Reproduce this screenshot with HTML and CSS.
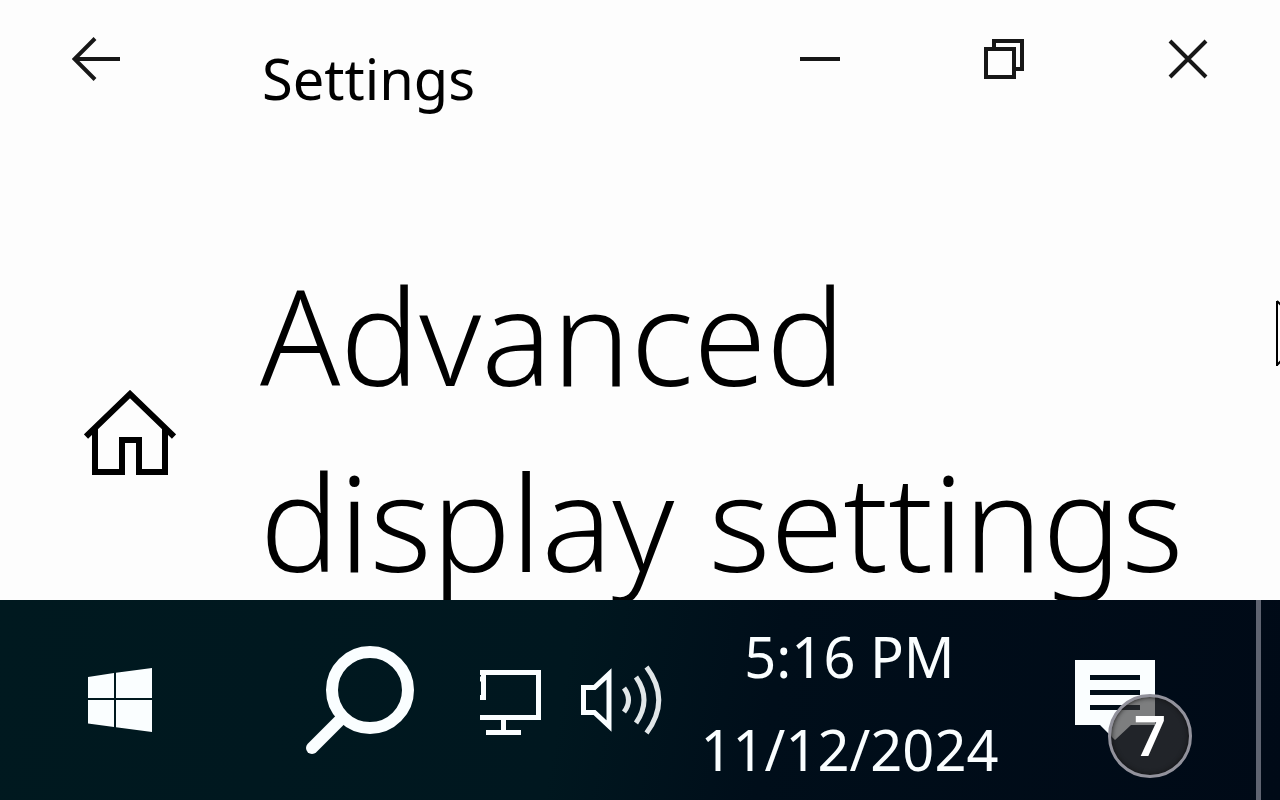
FILE: index.html
```html
<!DOCTYPE html>
<html lang="en">

<head>
    <meta charset="UTF-8">
    <title>Settings</title>
    <link rel="stylesheet" href="styles.css">
</head>

<body>
    <div class="window">
        <header class="titlebar">
            <button type="button" class="back" aria-label="Back">
                <svg width="48" height="44" viewBox="0 0 48 44"><path d="M48 22H3M23 1.500L2.500 22L23 42.500"/></svg>
            </button>
            <div class="title">Settings</div>
            <div class="controls">
                <button type="button" aria-label="Minimize">
                    <svg width="40" height="40" viewBox="0 0 40 40"><path d="M0 20H40"/></svg>
                </button>
                <button type="button" aria-label="Restore">
                    <svg width="40" height="40" viewBox="0 0 40 40"><path d="M2 10H30V38H2ZM10 10V2H38V30H30"/></svg>
                </button>
                <button type="button" aria-label="Close">
                    <svg width="40" height="40" viewBox="0 0 40 40"><path d="M2 2L38 38M38 2L2 38"/></svg>
                </button>
            </div>
        </header>
        <main class="page">
            <a href="#" class="home" aria-label="Home">
                <svg width="92" height="86" viewBox="0 0 92 86"><path d="M2 46.500L46 4L90 46.500M11 39V82H38V50H55V82H81V39"/></svg>
            </a>
            <h1>Advanced display settings</h1>
        </main>
        <svg class="pointer" width="4" height="70" viewBox="0 0 4 70"><path d="M1 2V67M1 2L5 6M1 66L5 62"/></svg>
    </div>
    <footer class="taskbar">
        <button type="button" class="start" aria-label="Start">
            <svg width="64" height="64" viewBox="0 0 64 64"><path d="M0 9L26 5V30H0ZM28 4.700L64 0V30H28ZM0 32H26V59L0 55.500ZM28 32H64V64L28 59.300Z"/></svg>
        </button>
        <button type="button" class="search" aria-label="Search">
            <svg width="108" height="108" viewBox="0 0 108 108"><circle cx="64" cy="44" r="38"/><path d="M35 73L6 102"/></svg>
        </button>
        <div class="tray">
            <button type="button" aria-label="Network">
                <svg width="61" height="72" viewBox="0 0 61 72"><path d="M0 8.500H58.500V53.500H0M3.500 8.500V36M0 15H4M0 33.500H6M23.500 54V68M6 68.500H41"/></svg>
            </button>
            <button type="button" aria-label="Volume">
                <svg width="82" height="72" viewBox="0 0 82 72"><path d="M2.500 23.500H13.500L28 10V62L13.500 48.500H2.500Z"/><path class="waves" d="M43 24Q52 36 43 48M55 13Q71 36 55 59M65.500 3Q90 36 65.500 69"/></svg>
            </button>
        </div>
        <button type="button" class="clock">
            <span>5:16 PM</span>
            <span>11/12/2024</span>
        </button>
        <button type="button" class="notices" aria-label="7 notifications">
            <svg width="80" height="80" viewBox="0 0 80 80"><path class="bubble" d="M0 0H80V65H56L40 80L25 65H0Z"/><path class="lines" d="M15 17.500H65M15 32.500H65M15 47.500H65"/></svg>
            <span class="count">7</span>
        </button>
        <button type="button" class="desktop" aria-label="Show desktop"></button>
    </footer>
</body>

</html>
```

FILE: styles.css
```css
* {
    padding: 0px;
    margin: 0px;
    box-sizing: border-box;
}

body {
    display: flex;
    flex-direction: column;
    height: 100vh;
    overflow: hidden;
    background: #fdfdfd;
    color: #000;
    font-family: "Noto Sans", "Open Sans", sans-serif;
}

button {
    border: none;
    background: none;
    color: inherit;
    font: inherit;
}

svg {
    display: block;
    fill: none;
    stroke: currentColor;
    stroke-width: 4;
}

/* window */
.window {
    flex: 1;
    min-height: 0;
    position: relative;
    overflow: hidden;
}

.titlebar {
    display: flex;
    height: 240px;
    align-items: flex-start;
    color: #171717;
}

.titlebar button {
    display: flex;
    align-items: center;
    justify-content: center;
    height: 118px;
}

.back {
    width: 192px;
}

.title {
    flex: 1;
    padding: 38px 0 0 70px;
    font-size: 56px;
    line-height: 80px;
    color: #000;
}

.controls {
    display: flex;
}

.controls button {
    width: 184px;
}

.page {
    display: flex;
    align-items: flex-start;
}

.home {
    flex: none;
    display: flex;
    justify-content: center;
    width: 260px;
    padding-top: 150px;
    color: #000;
}

.home svg {
    stroke-width: 6;
}

h1 {
    flex: 1;
    padding-top: 2px;
    font-size: 132px;
    font-weight: 350;
    line-height: 186px;
}

.pointer {
    position: absolute;
    right: 0px;
    top: 299px;
    stroke-width: 2;
}

/* taskbar */
.taskbar {
    flex: none;
    display: flex;
    height: 200px;
    background: linear-gradient(100deg, #00191f 0%, #00171f 44%, #000e1a 60%, #000a17 100%);
    color: #fafeff;
}

.taskbar button {
    display: flex;
    align-items: center;
    justify-content: center;
}

.start,
.search {
    width: 240px;
}

.start svg {
    fill: currentColor;
    stroke: none;
}

.search svg {
    stroke-width: 12;
    stroke-linecap: round;
}

.tray {
    display: flex;
    gap: 40px;
}

.tray svg {
    stroke-width: 5;
}

.tray .waves {
    opacity: 0.9;
}

.taskbar .clock {
    flex: 1;
    flex-direction: column;
    align-items: center;
    padding-top: 6px;
    font-size: 56px;
    line-height: 93px;
    white-space: nowrap;
}

.taskbar .notices {
    position: relative;
    width: 220px;
    padding-right: 62px;
}

.bubble {
    fill: currentColor;
    stroke: none;
}

.lines {
    stroke: #000e19;
    stroke-width: 5;
}

.count {
    position: absolute;
    left: 72px;
    top: 94px;
    width: 84px;
    height: 84px;
    border: 3px solid #92929c;
    border-radius: 50%;
    background: rgba(53, 50, 52, 0.63);
    box-shadow: inset 0 0 5px #111;
    color: #fff;
    font-size: 56px;
    font-weight: 600;
    line-height: 74px;
    text-align: center;
}

.desktop {
    width: 24px;
    border-left: 5px solid #5f6471;
}
```
